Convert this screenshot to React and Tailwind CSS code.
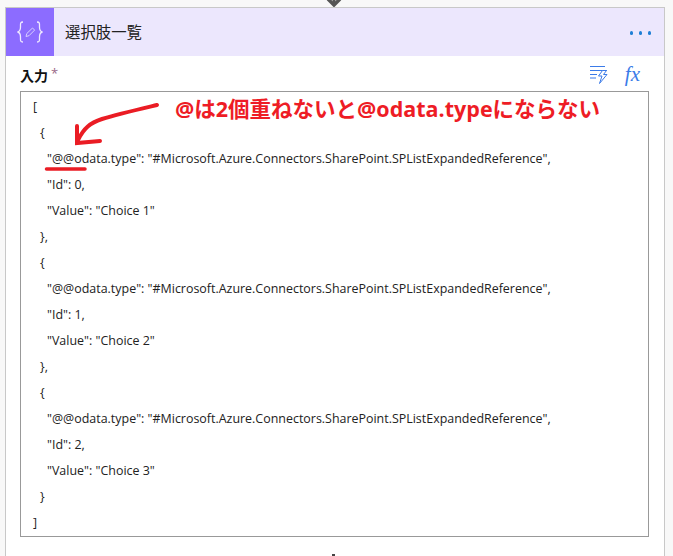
import React from "react";

const lines = [
  ["pl-0", '['],
  ["pl-[7px]", '{'],
  ["pl-[14px]", '"@@odata.type": "#Microsoft.Azure.Connectors.SharePoint.SPListExpandedReference",'],
  ["pl-[14px]", '"Id": 0,'],
  ["pl-[14px]", '"Value": "Choice 1"'],
  ["pl-[7px]", '},'],
  ["pl-[7px]", '{'],
  ["pl-[14px]", '"@@odata.type": "#Microsoft.Azure.Connectors.SharePoint.SPListExpandedReference",'],
  ["pl-[14px]", '"Id": 1,'],
  ["pl-[14px]", '"Value": "Choice 2"'],
  ["pl-[7px]", '},'],
  ["pl-[7px]", '{'],
  ["pl-[14px]", '"@@odata.type": "#Microsoft.Azure.Connectors.SharePoint.SPListExpandedReference",'],
  ["pl-[14px]", '"Id": 2,'],
  ["pl-[14px]", '"Value": "Choice 3"'],
  ["pl-[7px]", '}'],
  ["pl-0", ']'],
];

const font = "font-['Open_Sans','Noto_Sans_CJK_JP',sans-serif]";

export default function App() {
  return (
    <div className={`relative h-[556px] w-[673px] overflow-hidden bg-[#f8f8f8] pl-[5px] pt-[7px] ${font}`}>
      <svg className="absolute left-[326px] top-0" width="16" height="7" viewBox="0 0 16 7">
        <path d="M2 -1 L8 5 L14 -1" fill="none" stroke="#555" strokeWidth="3.5" />
        <path d="M8 -1 V5" stroke="#555" strokeWidth="3" />
      </svg>
      <div className="h-[600px] w-[660px] border border-[#c8c8c8] bg-white">
        <div className="flex h-12 items-center bg-[#ece7fd]">
          <div className="flex h-12 w-12 items-center justify-center bg-[#8c6cff]">
            <svg width="28" height="24" viewBox="0 0 28 24" fill="none" stroke="#efeaff" strokeWidth="1.3">
              <path d="M7 2 C4 2 4.5 4 4.5 7 C4.5 10 4 11.5 1.5 12 C4 12.5 4.5 14 4.5 17 C4.5 20 4 22 7 22" />
              <path d="M21 2 C24 2 23.5 4 23.5 7 C23.5 10 24 11.5 26.5 12 C24 12.5 23.5 14 23.5 17 C23.5 20 24 22 21 22" />
              <path d="M10 16.5 L10.8 13.5 L16.5 8 L18.6 10.1 L13 15.7 Z" stroke="#d9cfff" strokeWidth="1" />
            </svg>
          </div>
          <span className="ml-[11px] mt-[1px] text-[15.4px] leading-none text-[#222]">選択肢一覧</span>
          <div className="ml-auto mr-[13px] mt-[2px] flex gap-[5.5px]">
            <span className="h-[3.5px] w-[3.5px] rounded-full bg-[#1f7fd6]" />
            <span className="h-[3.5px] w-[3.5px] rounded-full bg-[#1f7fd6]" />
            <span className="h-[3.5px] w-[3.5px] rounded-full bg-[#1f7fd6]" />
          </div>
        </div>

        <div className="flex h-[35px] items-center pl-[14px] pr-[24px]">
          <span className="mt-[4px] text-[14px] font-bold leading-none text-[#111]">入力</span>
          <span className="ml-[3px] text-[13px] leading-none text-[#9a6a88]">*</span>
          <svg className="ml-auto mt-[2px]" width="20" height="20" viewBox="0 0 20 20" fill="none" stroke="#3b7be8" strokeWidth="1">
            <path d="M1 1.5 H16 M1 5.5 H18 M1 9.5 H8 M1 13 H7" />
            <path d="M13.5 5.5 L9.5 11 H13 L10.5 18.5 L18 9.5 H14.5 L17.5 5.5 Z" fill="#fff" />
          </svg>
          <span className="ml-[16px] mt-[2px] font-['Liberation_Serif',serif] text-[21px] italic leading-none text-[#3b7be8]">fx</span>
        </div>

        <div className="mx-[14px] h-[446px] w-[629px] border border-[#999] bg-white pl-[12px] pt-[2px]">
          {lines.map(([indent, text], i) => (
            <div key={i} className={`h-[26px] whitespace-pre text-[12.45px] leading-[26px] text-[#222] ${indent}`}>
              {text}
            </div>
          ))}
        </div>
      </div>

      <svg className="absolute left-[40px] top-[98px]" width="125" height="80" viewBox="0 0 125 80" fill="none" stroke="#ea1c24" strokeLinecap="round">
        <path d="M117 7 C100 11 78 16 62 21 C50 25 44 30 38 42" strokeWidth="4" />
        <path d="M37 28 L37 45 L60 43" strokeWidth="4" />
        <path d="M6.5 71 H45" strokeWidth="3.5" />
      </svg>
      <span className="absolute left-[175px] top-[96px] whitespace-nowrap text-[21.5px] font-bold leading-[26px] text-[#ee1c25]">
        @は2個重ねないと@odata.typeにならない
      </span>
      <div className="absolute bottom-0 left-[332px] h-[2px] w-[3px] bg-[#444]" />
    </div>
  );
}
